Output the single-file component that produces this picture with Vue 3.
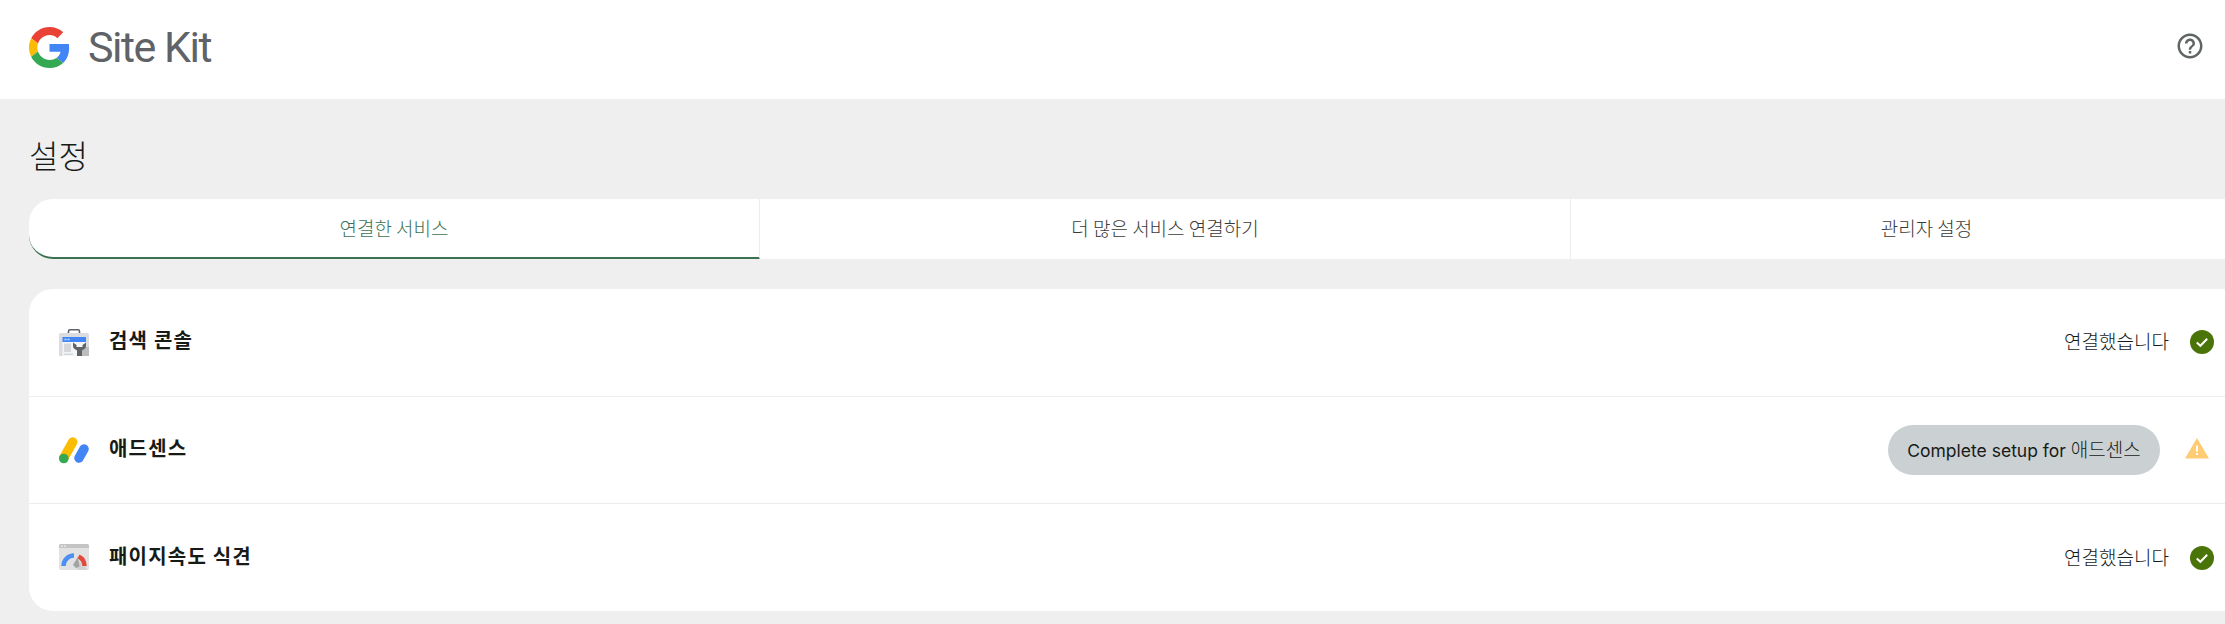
<template>
  <div class="page">
    <header class="top-bar">
      <div class="brand">
        <svg class="g-logo" viewBox="0 0 48 48" width="41" height="41">
          <path fill="#EA4335" d="M24 9.5c3.54 0 6.71 1.22 9.21 3.6l6.85-6.85C35.9 2.38 30.47 0 24 0 14.62 0 6.51 5.38 2.56 13.22l7.98 6.19C12.43 13.72 17.74 9.5 24 9.5z" />
          <path fill="#4285F4" d="M46.98 24.55c0-1.57-.15-3.09-.38-4.55H24v9.02h12.94c-.58 2.96-2.26 5.48-4.78 7.18l7.73 6c4.51-4.18 7.09-10.36 7.09-17.65z" />
          <path fill="#FBBC05" d="M10.53 28.59c-.48-1.45-.76-2.99-.76-4.59s.27-3.14.76-4.59l-7.98-6.19C.92 16.46 0 20.12 0 24c0 3.88.92 7.54 2.56 10.78l7.97-6.19z" />
          <path fill="#34A853" d="M24 48c6.48 0 11.93-2.13 15.89-5.81l-7.73-6c-2.15 1.45-4.92 2.3-8.16 2.3-6.26 0-11.57-4.22-13.47-9.91l-7.98 6.19C6.51 42.62 14.62 48 24 48z" />
        </svg>
        <span class="brand-name">Site Kit</span>
      </div>
      <svg class="help" viewBox="0 0 24 24" width="30" height="30">
        <path fill="#5f6561" d="M11 18h2v-2h-2v2zm1-16C6.48 2 2 6.48 2 12s4.48 10 10 10 10-4.48 10-10S17.52 2 12 2zm0 18c-4.41 0-8-3.59-8-8s3.59-8 8-8 8 3.59 8 8-3.59 8-8 8zm0-14c-2.21 0-4 1.79-4 4h2c0-1.1.9-2 2-2s2 .9 2 2c0 2-3 1.75-3 5h2c0-2.25 3-2.5 3-5 0-2.21-1.79-4-4-4z" />
      </svg>
    </header>

    <main class="content">
      <h1 class="title">설정</h1>

      <nav class="tabs">
        <div
          v-for="tab in tabs"
          :key="tab.label"
          :class="['tab', { active: tab.active }]"
        >
          {{ tab.label }}
        </div>
      </nav>

      <section class="card">
        <div v-for="row in rows" :key="row.name" class="row">
          <div class="row-left">
            <svg v-if="row.icon === 'console'" class="svc-icon" viewBox="0 0 30 27" width="30" height="27">
              <path d="M9.5 5V2.4C9.5 1.4 10.2.8 11 .8h8c.8 0 1.5.6 1.5 1.6V5" fill="none" stroke="#5f6368" stroke-width="1.6" />
              <path fill="#dadce0" d="M0 6a2 2 0 0 1 2-2h26a2 2 0 0 1 2 2v21H0z" />
              <path fill="#4285f4" d="M3.5 8H27v5H3.5z" />
              <path fill="#bbdefb" d="M5.5 9.8h2v1.4h-2zM8.5 9.8h2v1.4h-2z" />
              <path fill="#f4f5f6" d="M3.5 13H27v14H3.5z" />
              <path fill="#d5d7da" d="M5 14.5h7V23H5zM5 24.5h9V26H5z" />
              <path fill="#bdbdbd" d="M23 18h7v9h-7z" />
              <path fill="#5f6368" d="M14 13.5v3.5c0 2 1.5 3.6 4 4.2V27h5v-5.8c2.5-.6 4-2.2 4-4.2v-3.5l-3.5 2.5v2h-6v-2z" />
            </svg>
            <svg v-else-if="row.icon === 'adsense'" class="svc-icon" viewBox="0 0 30 27" width="30" height="27">
              <line x1="4.7" y1="21" x2="13.7" y2="5" stroke="#fbbc04" stroke-width="9.5" stroke-linecap="round" />
              <line x1="20" y1="21" x2="25" y2="12" stroke="#4285f4" stroke-width="9.5" stroke-linecap="round" />
              <circle cx="4.8" cy="21.5" r="4.8" fill="#34a853" />
            </svg>
            <svg v-else class="svc-icon" viewBox="0 0 30 27" width="30" height="27">
              <rect x="0" y="0" width="30" height="26" rx="2" fill="#e2e2e2" />
              <path d="M0 2a2 2 0 0 1 2-2h26a2 2 0 0 1 2 2v2H0z" fill="#c4c4c4" />
              <path fill="#eee" d="M2 1.4h2v1.3H2zM5 1.4h2v1.3H5z" />
              <path d="M16 23l3.500-7 8 8v2H20z" fill="#d2d2d2" />
              <path d="M4.5 22a10.500 10.500 0 0 1 10.500-10.500" fill="none" stroke="#4d90f5" stroke-width="4.500" />
              <path d="M19.500 12.500a10.500 10.500 0 0 1 6 9.500" fill="none" stroke="#e3493b" stroke-width="4.500" />
              <path d="M14 21l4.800-8 1.700 9.500-3.500 1.500z" fill="#a3a3a3" />
            </svg>
            <span class="svc-name">{{ row.name }}</span>
          </div>
          <div class="row-right">
            <template v-if="row.connected">
              <span class="status">연결했습니다</span>
              <svg class="state-icon" viewBox="0 0 24 24" width="24" height="24">
                <circle cx="12" cy="12" r="12" fill="#4b7408" />
                <path d="M6.8 12.4l3.6 3.4 6.8-7" fill="none" stroke="#fff" stroke-width="2" />
              </svg>
            </template>
            <template v-else>
              <button class="setup">Complete setup for <span class="setup-name">{{ row.name }}</span></button>
              <svg class="state-icon warn" viewBox="0 0 24 24" width="24" height="24">
                <path d="M12 2L24 22.5H0z" fill="#ffcb73" />
                <path d="M11 9.5h2v6h-2zM11 17h2v2h-2z" fill="#fff" />
              </svg>
            </template>
          </div>
        </div>
      </section>
    </main>
  </div>
</template>

<script setup>
const tabs = [
  { label: '연결한 서비스', active: true },
  { label: '더 많은 서비스 연결하기' },
  { label: '관리자 설정' },
]

const rows = [
  { name: '검색 콘솔', icon: 'console', connected: true },
  { name: '애드센스', icon: 'adsense', connected: false },
  { name: '패이지속도 식견', icon: 'speed', connected: true },
]
</script>

<style>
html,
body {
  margin: 0;
  overflow: hidden;
  background: #efefef;
}
</style>

<style scoped>
.page {
  width: 2225px;
  height: 624px;
  overflow: hidden;
  background: #efefef;
  font-family: "Noto Sans CJK KR", sans-serif;
  color: #161b18;
}

.top-bar {
  height: 99px;
  box-sizing: border-box;
  padding: 0 20px 0 29px;
  background: #ffffff;
  display: flex;
  align-items: center;
  justify-content: space-between;
}

.brand {
  display: flex;
  align-items: center;
  gap: 18px;
  margin-top: -5px;
}

.brand-name {
  font-family: Roboto, sans-serif;
  font-size: 43px;
  color: #5f6368;
  letter-spacing: -1.5px;
}

.help {
  margin-top: -7px;
}

.content {
  width: 2283px;
  box-sizing: border-box;
  padding-left: 29px;
}

.title {
  margin: 0;
  padding-top: 31px;
  height: 100px;
  box-sizing: border-box;
  font-size: 32px;
  line-height: 48px;
  font-weight: 300;
}

.tabs {
  display: grid;
  grid-template-columns: 731px 811px 1fr;
  height: 60px;
  background: #ffffff;
  border-radius: 24px 0 0 24px;
}

.tab {
  display: flex;
  align-items: center;
  justify-content: center;
  padding-bottom: 4px;
  box-sizing: border-box;
  border-right: 1px solid #ebeef0;
  font-size: 19px;
  font-weight: 300;
  color: #393b38;
}

.tab.active {
  color: #3c7251;
  border-bottom: 2px solid #3c7251;
  border-radius: 24px 0 0 24px;
  padding-bottom: 2px;
}

.card {
  margin-top: 30px;
  height: 322px;
  background: #ffffff;
  border-radius: 24px;
  display: flex;
  flex-direction: column;
}

.row {
  flex: 1;
  display: flex;
  align-items: center;
  justify-content: space-between;
  padding: 0 69px 0 30px;
  border-bottom: 1px solid #ebeef0;
}

.row:last-child {
  border-bottom: none;
}

.row-left,
.row-right {
  display: flex;
  align-items: center;
}

.svc-icon {
  flex: none;
}

.svc-name {
  margin-left: 20px;
  font-size: 20px;
  letter-spacing: 1.2px;
  font-weight: 700;
  margin-top: -5px;
}

.status {
  font-size: 19px;
  font-weight: 300;
  margin-right: 21px;
  margin-top: -3px;
}

.setup {
  width: 272px;
  height: 50px;
  border: none;
  border-radius: 25px;
  background: #cbd0d3;
  color: #161b18;
  font-family: Inter, "Noto Sans CJK KR", sans-serif;
  font-size: 17.5px;
  padding: 0 0 3px;
  margin-right: 25px;
}

.setup-name {
  font-size: 19px;
  font-family: "Noto Sans CJK KR", sans-serif;
  font-weight: 300;
}

.state-icon {
  flex: none;
}

.warn {
  margin-top: -4px;
  margin-right: 5px;
}
</style>
